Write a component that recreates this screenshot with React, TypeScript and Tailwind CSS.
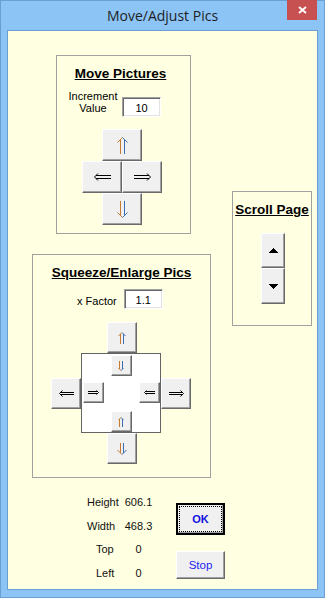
import React from "react";

type Dir = "up" | "down" | "left" | "right";

// double-line arrow like the Symbol font glyphs (⇑ ⇓ ⇐ ⇒)
function Arrow({ dir, len, thick }: { dir: Dir; len: number; thick: number }) {
  const horiz = dir === "left" || dir === "right";
  const pt = (u: number, v: number) => {
    if (dir === "right") return `${u},${v}`;
    if (dir === "left") return `${len - u},${v}`;
    if (dir === "down") return `${v},${u}`;
    return `${v},${len - u}`;
  };
  const half = thick / 2;
  const v1 = Math.floor(thick * 0.3) + 0.5;
  const v2 = thick - v1;
  const tip = len - 0.5;
  const back = len - half;
  const end = tip - (half - v1);
  const c1 = horiz ? "#000" : "#c47a30";
  const c2 = horiz ? "#000" : "#3d6fb0";
  return (
    <svg width={horiz ? len : thick} height={horiz ? thick : len} fill="none" strokeWidth={1}>
      <polyline points={`${pt(0, v1)} ${pt(end, v1)}`} stroke={c1} />
      <polyline points={`${pt(0, v2)} ${pt(end, v2)}`} stroke={c2} />
      <polyline points={`${pt(back, 0.5)} ${pt(tip, half)}`} stroke={c1} />
      <polyline points={`${pt(tip, half)} ${pt(back, thick - 0.5)}`} stroke={c2} />
    </svg>
  );
}

function Btn({ className, children }: { className: string; children?: React.ReactNode }) {
  return (
    <div
      className={`flex items-center justify-center bg-[#f0f0f0] border border-t-white border-l-white border-r-[#696969] border-b-[#696969] shadow-[inset_-1px_-1px_0_#a0a0a0] ${className}`}
    >
      {children}
    </div>
  );
}

function TextBox({ className, children }: { className: string; children: React.ReactNode }) {
  return (
    <div
      className={`w-[39px] h-[20px] bg-white border border-t-[#a0a0a0] border-l-[#a0a0a0] border-r-white border-b-white shadow-[inset_1px_1px_0_#696969,inset_-1px_-1px_0_#e3e3e3] pt-[4px] text-center text-[11px] leading-[12px] ${className}`}
    >
      {children}
    </div>
  );
}

function Heading({ className = "", children }: { className?: string; children: React.ReactNode }) {
  return (
    <div className={`text-center text-[13.5px] leading-[16px] font-bold underline ${className}`}>
      {children}
    </div>
  );
}

const stats = [
  { label: "Height", value: "606.1", pad: "" },
  { label: "Width", value: "468.3", pad: "" },
  { label: "Top", value: "0", pad: "pl-[9px]" },
  { label: "Left", value: "0", pad: "pl-[9px]" },
];

export default function App() {
  return (
    <div className="w-[325px] h-[598px] relative flex flex-col border border-[#6b9fd3] bg-[#8cc4f5] px-[6px] pb-[7px] font-['Liberation_Sans',Arial,sans-serif] text-black">
      <div className="h-[29px] text-center leading-[29px] text-[14px] text-[#1f1f1f] font-['Open_Sans',sans-serif]">
        Move/Adjust Pics
      </div>
      <div className="absolute top-[-1px] right-[7px] w-[30px] h-[20px] bg-[#c75050] flex items-center justify-center">
        <svg width="9" height="8" fill="none">
          <path d="M1 1 L8 7 M8 1 L1 7" stroke="white" strokeWidth="1.8" />
        </svg>
      </div>

      <div className="flex-1 border border-[#6b9fd3] bg-[#ffffe1] flex flex-col">
        <div className="flex items-start">
          <div className="flex flex-col w-[203px]">
            {/* Move Pictures */}
            <div className="ml-[48px] mt-[24px] w-[135px] h-[179px] border border-[#a0a0a0] pt-[10px] flex flex-col">
              <Heading className="pr-[6px]">Move Pictures</Heading>
              <div className="flex items-start mt-[8px] ml-[11px]">
                <div className="w-[50px] text-center text-[11px] leading-[12px]">
                  Increment
                  <br />
                  Value
                </div>
                <TextBox className="ml-[4px] mt-[7px]">10</TextBox>
              </div>
              <div className="mt-[12px] ml-[25px] w-[80px] flex flex-col items-center">
                <Btn className="w-[40px] h-[32px]">
                  <Arrow dir="up" len={17} thick={11} />
                </Btn>
                <div className="flex">
                  <Btn className="w-[40px] h-[32px]">
                    <Arrow dir="left" len={17} thick={8} />
                  </Btn>
                  <Btn className="w-[40px] h-[32px]">
                    <Arrow dir="right" len={17} thick={8} />
                  </Btn>
                </div>
                <Btn className="w-[40px] h-[32px]">
                  <Arrow dir="down" len={17} thick={11} />
                </Btn>
              </div>
            </div>

            {/* Squeeze/Enlarge Pics */}
            <div className="ml-[24px] mt-[20px] w-[179px] h-[224px] border border-[#a0a0a0] pt-[10px] flex flex-col">
              <Heading>Squeeze/Enlarge Pics</Heading>
              <div className="flex items-start mt-[8px] ml-[44px]">
                <div className="mt-[6px] text-[11px] leading-[12px]">x Factor</div>
                <TextBox className="ml-[7px]">1.1</TextBox>
              </div>
              <div className="mt-[13px] ml-[18px] w-[140px] flex flex-col items-start">
                <Btn className="ml-[56px] w-[30px] h-[31px]">
                  <Arrow dir="up" len={12} thick={8} />
                </Btn>
                <div className="flex items-center">
                  <Btn className="w-[30px] h-[31px]">
                    <Arrow dir="left" len={15} thick={7} />
                  </Btn>
                  <div className="w-[80px] h-[80px] bg-white border border-[#646464] flex flex-col">
                    <Btn className="self-center mt-[1px] w-[21px] h-[21px]">
                      <Arrow dir="down" len={10} thick={6} />
                    </Btn>
                    <div className="flex justify-between mt-[6px] pl-[1px]">
                      <Btn className="w-[21px] h-[21px]">
                        <Arrow dir="right" len={11} thick={5} />
                      </Btn>
                      <Btn className="w-[21px] h-[21px]">
                        <Arrow dir="left" len={11} thick={5} />
                      </Btn>
                    </div>
                    <Btn className="self-center mt-[8px] w-[21px] h-[21px]">
                      <Arrow dir="up" len={10} thick={6} />
                    </Btn>
                  </div>
                  <Btn className="w-[30px] h-[31px]">
                    <Arrow dir="right" len={15} thick={7} />
                  </Btn>
                </div>
                <Btn className="ml-[56px] w-[30px] h-[31px]">
                  <Arrow dir="down" len={12} thick={10} />
                </Btn>
              </div>
            </div>
          </div>

          {/* Scroll Page */}
          <div className="ml-[21px] mt-[160px] w-[80px] h-[135px] border border-[#a0a0a0] pt-[10px] flex flex-col">
            <Heading>Scroll Page</Heading>
            <div className="mt-[15px] ml-[28px] w-[24px] flex flex-col">
              <Btn className="w-[24px] h-[35px]">
                <svg width="10" height="5" shapeRendering="crispEdges">
                  <polygon points="5,0 10,5 0,5" fill="#000" />
                </svg>
              </Btn>
              <Btn className="w-[24px] h-[36px]">
                <svg width="10" height="5" shapeRendering="crispEdges">
                  <polygon points="0,0 10,0 5,5" fill="#000" />
                </svg>
              </Btn>
            </div>
          </div>
        </div>

        <div className="flex mt-[13px] ml-[79px]">
          <div className="flex flex-col text-[11px] text-[#111]">
            {stats.map((s) => (
              <div key={s.label} className="flex h-[23.5px] leading-[23.5px]">
                <span className={`w-[37px] ${s.pad}`}>{s.label}</span>
                <span className="w-[29px] text-center">{s.value}</span>
              </div>
            ))}
          </div>
          <div className="ml-[23px] mt-[12px] flex flex-col">
            <div className="w-[49px] h-[32px] border-2 border-black bg-[#f0f0f0] p-[1px] shadow-[inset_-1px_-1px_0_#a0a0a0]">
              <div className="w-full h-full border border-dotted border-black flex items-center justify-center text-[11px] leading-[12px] font-bold text-[#1010e0]">
                OK
              </div>
            </div>
            <Btn className="mt-[16px] w-[49px] h-[28px] text-[11.5px] leading-[12px] text-[#2424f0]">Stop</Btn>
          </div>
        </div>
      </div>
    </div>
  );
}
